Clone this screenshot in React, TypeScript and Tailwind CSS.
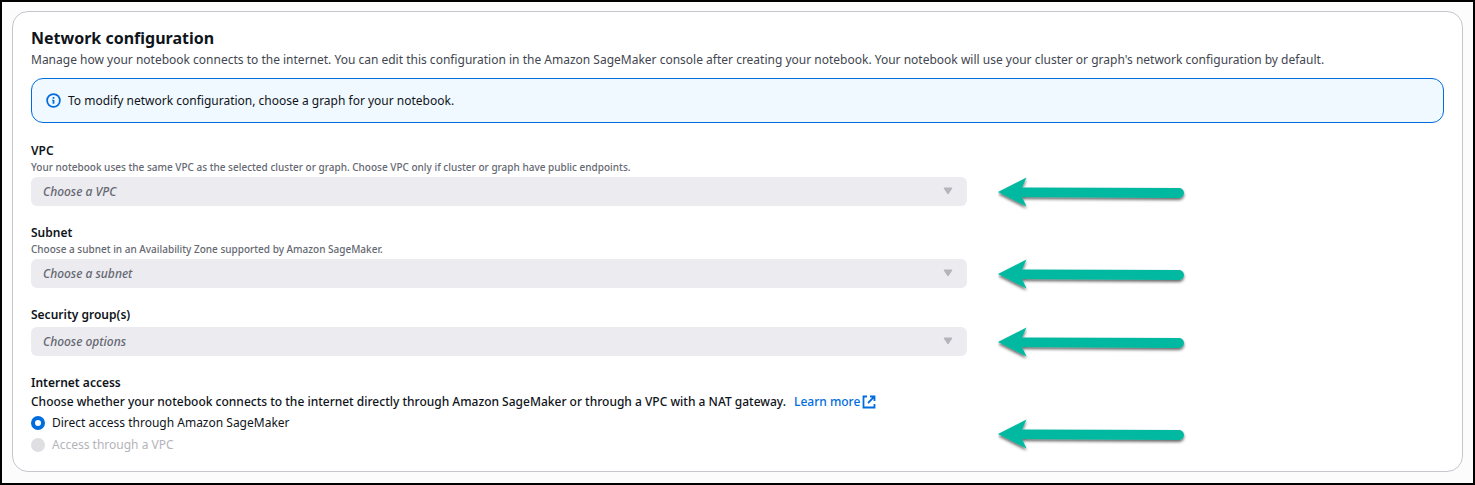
import React from 'react';

function Arrow() {
  return (
    <svg className="h-10 w-48 shrink-0" viewBox="0 0 192 40" fill="none" aria-hidden="true">
      <defs>
        <filter id="arrow-shadow" x="-5%" y="-30%" width="110%" height="180%">
          <feDropShadow dx="0" dy="2" stdDeviation="1.5" floodColor="#000" floodOpacity="0.6" />
        </filter>
      </defs>
      <path
        d="M0 20 L28.5 5.5 L24 15.5 L181 16 A5 5 0 0 1 181 26 L24 25 L28.5 34.5 Z"
        fill="#01b9a0"
        filter="url(#arrow-shadow)"
      />
    </svg>
  );
}

function Row({ tall = false, children }: { tall?: boolean; children: React.ReactNode }) {
  return (
    <div className="grid grid-cols-[2fr_1fr] items-end gap-[9px]">
      <div className="min-w-0">{children}</div>
      <div className={`flex items-center pl-[22px] ${tall ? 'h-11' : 'h-[29px]'}`}>
        <Arrow />
      </div>
    </div>
  );
}

interface FieldProps {
  id: string;
  label: string;
  hint?: string;
  placeholder: string;
}

function SelectField({ id, label, hint, placeholder }: FieldProps) {
  return (
    <Row>
      <label htmlFor={id} className="block leading-4 font-semibold">
        {label}
      </label>
      {hint && (
        <p id={`${id}-hint`} className="text-[10px] leading-4 font-medium whitespace-nowrap text-[#656871]">
          {hint}
        </p>
      )}
      <div className={`relative ${hint ? 'mt-0.5' : 'mt-1'}`}>
        <select
          id={id}
          disabled
          aria-describedby={hint ? `${id}-hint` : undefined}
          className="block h-[29px] w-full appearance-none rounded-md bg-[#ebebf0] pr-8 pl-3 font-medium text-[#656871] italic opacity-100"
        >
          <option>{placeholder}</option>
        </select>
        <svg
          className="pointer-events-none absolute top-[10px] right-[14px] h-2 w-[10px]"
          viewBox="0 0 10 8"
          aria-hidden="true"
        >
          <path d="M1 1h8L5 7Z" fill="#b4b4bb" stroke="#b4b4bb" strokeWidth="1" strokeLinejoin="round" />
        </svg>
      </div>
    </Row>
  );
}

export default function App() {
  return (
    <main className="border-2 border-black bg-[#fcfcfd] px-[10px] pt-[9px] pb-[11px] font-['Noto_Sans',sans-serif] text-[12px] text-[#0f141a]">
      <section className="rounded-2xl border border-[#c6c6cd] bg-white px-[18px] pt-[14px] pb-[15px]">
        <h2 className="text-[16px] leading-6 font-bold">Network configuration</h2>
        <p className="mt-px leading-[18px] text-[#424650]">
          Manage how your notebook connects to the internet. You can edit this configuration in the Amazon SageMaker
          console after creating your notebook. Your notebook will use your cluster or graph's network configuration by
          default.
        </p>

        <div
          role="status"
          className="mt-[9px] flex h-[45px] items-center gap-[7px] rounded-xl border border-[#006ce0] bg-[#f0f9ff] px-[14px]"
        >
          <svg className="size-[15px] shrink-0" viewBox="0 0 16 16" fill="none" stroke="#006ce0" aria-hidden="true">
            <circle cx="8" cy="8" r="6.8" strokeWidth="1.9" />
            <path d="M8 11.5V7.4M8 6V4.2" strokeWidth="1.9" />
            <path d="M6.6 7.6H8" strokeWidth="1" />
          </svg>
          <span>To modify network configuration, choose a graph for your notebook.</span>
        </div>

        <form className="mt-5 flex flex-col gap-[19px]">
          <SelectField
            id="vpc"
            label="VPC"
            hint="Your notebook uses the same VPC as the selected cluster or graph. Choose VPC only if cluster or graph have public endpoints."
            placeholder="Choose a VPC"
          />
          <SelectField
            id="subnet"
            label="Subnet"
            hint="Choose a subnet in an Availability Zone supported by Amazon SageMaker."
            placeholder="Choose a subnet"
          />
          <SelectField id="security-groups" label="Security group(s)" placeholder="Choose options" />

          <Row tall>
            <fieldset>
              <legend className="leading-4 font-semibold">Internet access</legend>
              <p className="mt-px flex items-center leading-5 font-medium whitespace-nowrap">
                Choose whether your notebook connects to the internet directly through Amazon SageMaker or through a VPC
                with a NAT gateway.
                <a href="#learn-more" className="ml-2 inline-flex items-center gap-0.5 text-[#006ce0]">
                  Learn more
                  <svg className="size-[14px]" viewBox="0 0 14 14" fill="none" stroke="#006ce0" strokeWidth="1.8" aria-hidden="true">
                    <path d="M5 1.5H1.5v11h11V9M8 1.5h4.5V6M12.3 1.7 6 8" />
                  </svg>
                </a>
              </p>
              <label className="flex items-center gap-[7px] leading-[22px]">
                <input
                  type="radio"
                  name="access"
                  defaultChecked
                  className="size-[14px] appearance-none rounded-full border-4 border-[#006ce0] bg-white"
                />
                Direct access through Amazon SageMaker
              </label>
              <label className="flex items-center gap-[7px] leading-[22px] text-[#b4b4bb]">
                <input type="radio" name="access" disabled className="size-[14px] appearance-none rounded-full bg-[#dedee3]" />
                Access through a VPC
              </label>
            </fieldset>
          </Row>
        </form>
      </section>
    </main>
  );
}
